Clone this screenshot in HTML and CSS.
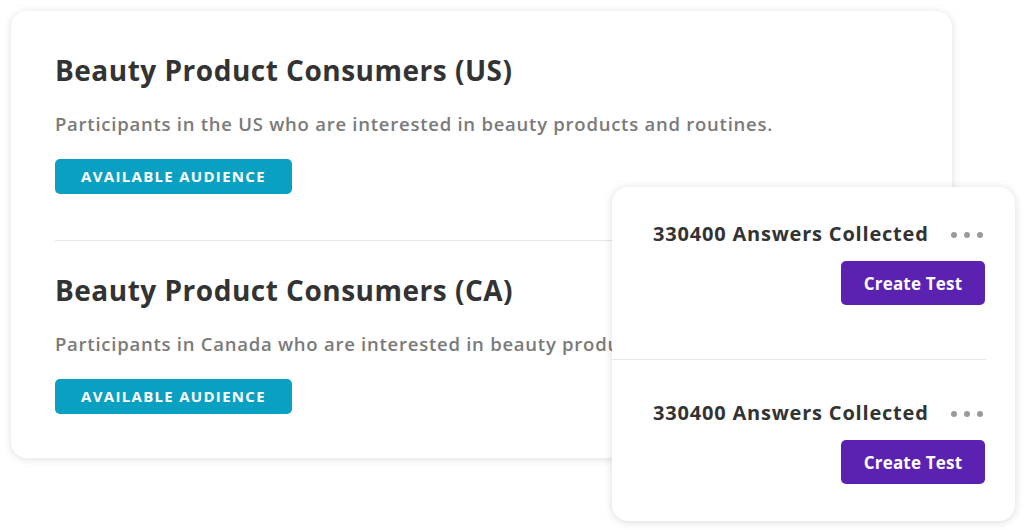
FILE: index.html
```html
<!DOCTYPE html>
<html lang="en">

<head>
    <meta charset="UTF-8">
    <meta name="viewport" content="width=device-width, initial-scale=1.0">
    <title>Audiences</title>
    <link rel="stylesheet" href="styles.css">
</head>

<body>
    <div class="stage">
        <div class="audience-card">
            <div class="audience">
                <h2>Beauty Product Consumers (US)</h2>
                <p>Participants in the US who are interested in beauty products and routines.</p>
                <span class="badge">AVAILABLE AUDIENCE</span>
            </div>
            <hr class="divider">
            <div class="audience">
                <h2>Beauty Product Consumers (CA)</h2>
                <p>Participants in Canada who are interested in beauty products and routines.</p>
                <span class="badge">AVAILABLE AUDIENCE</span>
            </div>
        </div>

        <div class="answers-card">
            <div class="answers">
                <div class="answers-head">
                    <span class="count">330400 Answers Collected</span>
                    <span class="dots"><i></i><i></i><i></i></span>
                </div>
                <button class="create">Create Test</button>
            </div>
            <hr class="divider small">
            <div class="answers">
                <div class="answers-head">
                    <span class="count">330400 Answers Collected</span>
                    <span class="dots"><i></i><i></i><i></i></span>
                </div>
                <button class="create">Create Test</button>
            </div>
        </div>
    </div>
</body>

</html>
```

FILE: styles.css
```css
body {
    margin: 0;
    background: #fff;
    font-family: "Open Sans", "Liberation Sans", sans-serif;
    color: #333;
}

.stage {
    position: relative;
    width: 1024px;
    height: 530px;
    overflow: hidden;
}

.audience-card {
    margin: 11px 0 0 11px;
    width: 941px;
    height: 447px;
    box-sizing: border-box;
    padding: 42px 44px 0;
    background: #fff;
    border-radius: 16px;
    box-shadow: 0 1px 8px rgba(0, 0, 0, 0.13);
    overflow: hidden;
}

.audience h2 {
    margin: 0;
    font-size: 28px;
    line-height: 34px;
    font-weight: 700;
    color: #333;
    letter-spacing: 0.5px;
}

.audience p {
    margin: 24px 0 23px;
    font-size: 18.5px;
    line-height: 25px;
    font-weight: 600;
    color: #7a7a7a;
    letter-spacing: 0.75px;
    white-space: nowrap;
}

.badge {
    display: inline-block;
    width: 237px;
    height: 35px;
    line-height: 35px;
    text-align: center;
    background: #0aa0c2;
    color: #fff;
    border-radius: 5px;
    font-size: 15px;
    font-weight: 700;
    letter-spacing: 1.3px;
}

.divider {
    border: 0;
    border-top: 1px solid #e6e6e6;
    margin: 46px 0 32px;
}

.answers-card {
    position: absolute;
    left: 612px;
    top: 187px;
    width: 403px;
    height: 334px;
    box-sizing: border-box;
    padding-top: 34px;
    background: #fff;
    border-radius: 16px;
    box-shadow: 0 1px 8px rgba(0, 0, 0, 0.15);
}

.answers {
    padding: 0 30px 0 41px;
    display: flex;
    flex-direction: column;
    align-items: flex-end;
}

.answers-head {
    width: 100%;
    display: flex;
    justify-content: space-between;
    align-items: center;
}

.count {
    font-size: 20px;
    line-height: 26px;
    font-weight: 700;
    color: #333;
    letter-spacing: 0.8px;
}

.dots {
    display: flex;
    gap: 7px;
    margin-right: 2px;
    margin-top: 2px;
}

.dots i {
    width: 6px;
    height: 6px;
    border-radius: 50%;
    background: #9a9a9a;
}

.create {
    margin-top: 14px;
    width: 144px;
    height: 44px;
    border: 0;
    border-radius: 5px;
    background: #5b22b1;
    color: #fff;
    font-family: inherit;
    font-size: 17px;
    font-weight: 700;
    letter-spacing: 0.2px;
}

.divider.small {
    margin: 54px 29px 40px 0;
}
```
